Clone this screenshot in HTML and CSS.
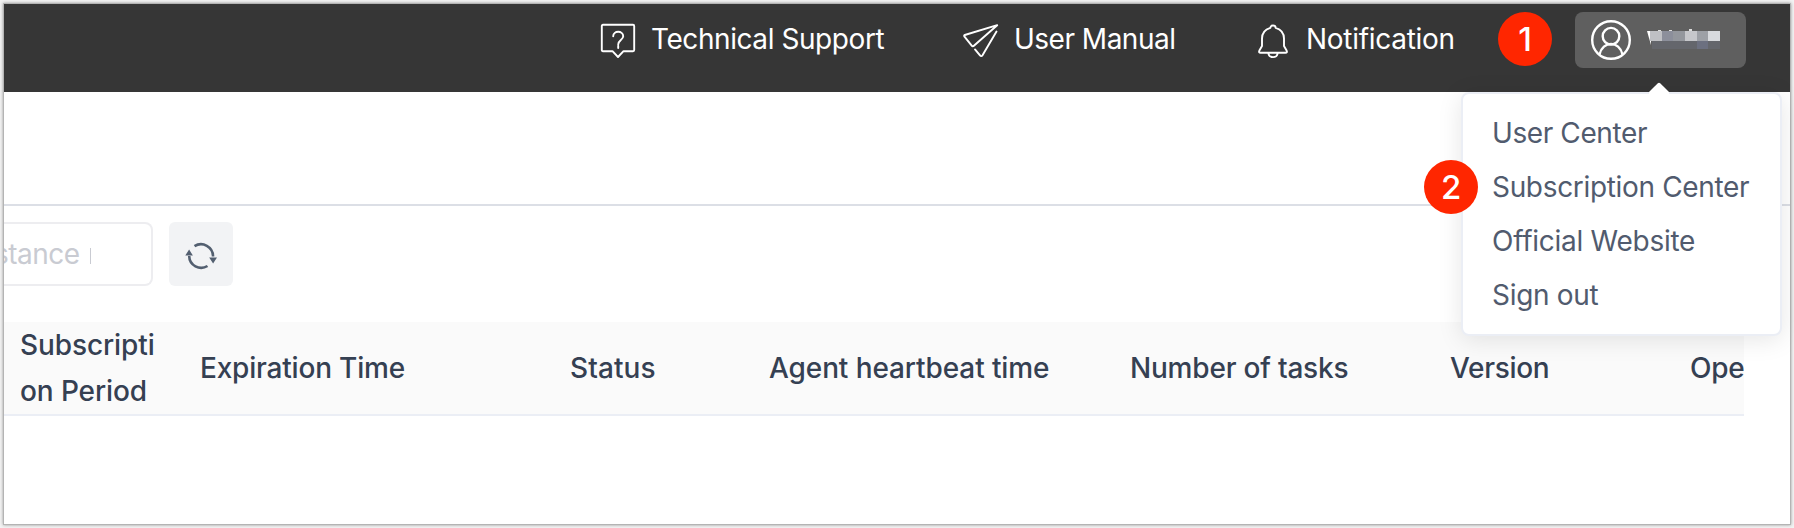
FILE: index.html
```html
<!DOCTYPE html>
<html lang="en">
<head>
<meta charset="utf-8">
<title>Console</title>
<link rel="stylesheet" href="styles.css">
</head>
<body>
<div class="window">
  <header class="topbar">
    <a class="nav nav-support">
      <svg class="icon" width="36" height="36" viewBox="0 0 36 36"><path d="M3 1.800h30q1.200 0 1.200 1.200v24q0 1.200-1.200 1.200h-9.500L18 34l-5.500-5.800H3q-1.200 0-1.200-1.200V3q0-1.200 1.200-1.200z"/><path d="M13.200 13.300c0-6 10-6 10 0 0 3.600-5 4-5 8.200M18.200 22.800v2.200"/></svg>
      <span>Technical Support</span>
    </a>
    <a class="nav nav-manual">
      <svg class="icon" width="36" height="36" viewBox="0 0 36 36"><path d="M34.200 2.200L1.800 12q-1 .4-.5 1.400l7.400 9.200q1 1.200 2.200.1zM33.500 8.500L19.500 32.200q-1.200 1.800-2.500.2l-5-6"/></svg>
      <span>User Manual</span>
    </a>
    <a class="nav nav-notice">
      <svg class="icon" width="30" height="36" viewBox="0 0 30 36"><path d="M12.300 4.800Q12.500 2.500 15 2.500t2.700 2.300c5.500 1.600 8.300 5.500 8.300 10.800v7.500l2.600 4.500q1 2.200-1.200 2.200H2.600q-2.200 0-1.200-2.200L4 23.100v-7.500C4 10.300 6.800 6.400 12.300 4.800zM10.500 30.800c.8 4.400 8.200 4.400 9 0"/></svg>
      <span>Notification</span>
    </a>
    <span class="badge">1</span>
    <div class="account">
      <svg class="avatar" width="42" height="42" viewBox="0 0 42 42"><circle cx="21" cy="21" r="18.800"/><circle cx="21" cy="17.200" r="8.300"/><path d="M9.500 35.500c3-14 20-14 23 0"/></svg>
      <svg class="mask" width="74" height="22" viewBox="0 0 74 22">
        <path d="M0 2h4v14z" fill="#fff"/><path d="M11 1h3v2h-3zM22 1h3v2h-3zM42 0h3v3h-3z" fill="#ddd"/>
        <path d="M3 2h12v10H3z" fill="#bfc0c4"/><path d="M15 2h11v10H15z" fill="#8c8f9b"/><path d="M26 2h12v10H26z" fill="#94979d"/><path d="M38 2h12v10H38z" fill="#c6c7cb"/><path d="M50 2h11v10H50z" fill="#9da0a6"/><path d="M61 2h12v10H61z" fill="#d8dade"/>
        <path d="M5 12h68v8H5z" fill="#64666c"/><path d="M50 12h11v8H50z" fill="#6c7080"/>
      </svg>
      <div class="menu">
        <svg class="arrow" width="20" height="13" viewBox="0 0 20 13"><path d="M0 10L8.800 1.200q1.200-1 2.400 0L20 10v3H0z"/></svg>
        <a class="m1">User Center</a>
        <a class="m2">Subscription Center<span class="badge badge-menu">2</span></a>
        <a class="m3">Official Website</a>
        <a class="m4">Sign out</a>
      </div>
    </div>
  </header>
  <div class="subbar"></div>
  <div class="toolbar">
    <div class="search"><span class="placeholder">stance</span><i class="cut"></i></div>
    <button class="refresh">
      <svg width="32" height="28" viewBox="0 0 32 28"><path class="arc" d="M9.500 4.200A12 12 0 0 1 28 14.500M22.500 24A12 12 0 0 1 4.200 14"/><path d="M24.200 15.500h7.800l-3.900 6zM.3 13.500h7.600L4.100 7.500z"/></svg>
    </button>
  </div>
  <div class="thead">
    <span class="c1">Subscripti<br>on Period</span>
    <span class="c2">Expiration Time</span>
    <span class="c3">Status</span>
    <span class="c4">Agent heartbeat time</span>
    <span class="c5">Number of tasks</span>
    <span class="c6">Version</span>
    <span class="c7">Ope</span>
  </div>
</div>
</body>
</html>
```
FILE: styles.css
```css
* { box-sizing: border-box; }
body {
  margin: 0;
  padding: 4px;
  height: 528px;
  overflow: hidden;
  background: #f3f3f3;
  font-family: Inter, "Liberation Sans", sans-serif;
  font-size: 28px;
}
.window {
  height: 520px;
  background: #fff;
  box-shadow: 0 0 0 1px #b4b4b4, 0 0 3px 1px #999;
}
.topbar {
  display: flex;
  height: 88px;
  background: #363636;
  color: #fff;
}
.nav {
  display: flex;
  align-items: flex-start;
  padding-top: 19px;
  white-space: nowrap;
}
.nav span { line-height: 34px; margin-top: -1px; }
.icon { fill: none; stroke: #fff; stroke-width: 1.9; stroke-linejoin: round; stroke-linecap: round; }
.nav-support { width: 363px; margin-left: 596px; gap: 15px; letter-spacing: -0.43px; }
.nav-manual { width: 295px; gap: 15px; letter-spacing: -0.5px; }
.nav-notice { width: 240px; gap: 18px; letter-spacing: -0.28px; }
.badge {
  width: 54px;
  height: 54px;
  flex: none;
  margin-top: 8px;
  border-radius: 50%;
  background: #ff2600;
  color: #fff;
  font-size: 33px;
  font-weight: 500;
  line-height: 54px;
  text-align: center;
}
.account {
  position: relative;
  display: flex;
  width: 171px;
  height: 56px;
  margin: 8px 0 0 23px;
  padding: 7px 0 0 15px;
  border-radius: 8px;
  background: #5f5f5f;
}
.avatar { fill: none; stroke: #fff; stroke-width: 2.4; }
.mask { margin: 10px 0 0 15px; }
.menu {
  position: absolute;
  top: 80px;
  left: -114px;
  width: 321px;
  height: 244px;
  padding: 12px 0 0 29px;
  border: 2px solid #ebeef5;
  border-radius: 8px;
  background: #fff;
  box-shadow: 0 4px 24px rgba(0, 0, 0, .1);
  color: #515b6e;
  white-space: nowrap;
}
.menu a { display: block; height: 54px; line-height: 54px; }
.arrow { position: absolute; top: -12px; left: 186px; fill: #fff; }
.badge-menu { position: absolute; top: 66px; left: -39px; margin: 0; }
.m1 { letter-spacing: -0.4px; }
.m2 { letter-spacing: -0.33px; }
.m3 { letter-spacing: -0.27px; }
.m4 { letter-spacing: -0.3px; }
.subbar { height: 114px; border-bottom: 2px solid #dcdfe6; }
.toolbar { display: flex; gap: 16px; height: 116px; padding-top: 16px; }
.search {
  display: flex;
  width: 149px;
  height: 64px;
  border: 2px solid #ededf0;
  border-left: 0;
  border-radius: 0 8px 8px 0;
  color: #c9cbd2;
  line-height: 61px;
  overflow: hidden;
}
.placeholder { width: 91px; margin-left: -10px; letter-spacing: -0.5px; }
.cut { width: 1px; height: 16px; margin: 24px 0 0 5px; background: #c9cbd2; }
.refresh {
  display: flex;
  align-items: center;
  justify-content: center;
  width: 64px;
  height: 64px;
  padding: 4px 0 0;
  border: 0;
  border-radius: 6px;
  background: #f2f3f5;
  fill: #535f70;
}
.arc { fill: none; stroke: #535f70; stroke-width: 2.6; }
.thead {
  display: grid;
  grid-template-columns: 180px 370px 199px 361px 320px 240px 70px;
  align-items: center;
  width: 1740px;
  height: 94px;
  border-bottom: 2px solid #ebeef5;
  background: #fafafa;
  color: #354052;
  font-weight: 500;
  line-height: 46px;
  white-space: nowrap;
  overflow: hidden;
}
.thead span { padding-left: 16px; letter-spacing: -0.2px; }
.thead .c1 { letter-spacing: -0.1px; }
.thead .c3 { letter-spacing: 0.1px; }
.thead .c4 { letter-spacing: -0.1px; }
.thead .c6 { letter-spacing: -0.3px; }
```
